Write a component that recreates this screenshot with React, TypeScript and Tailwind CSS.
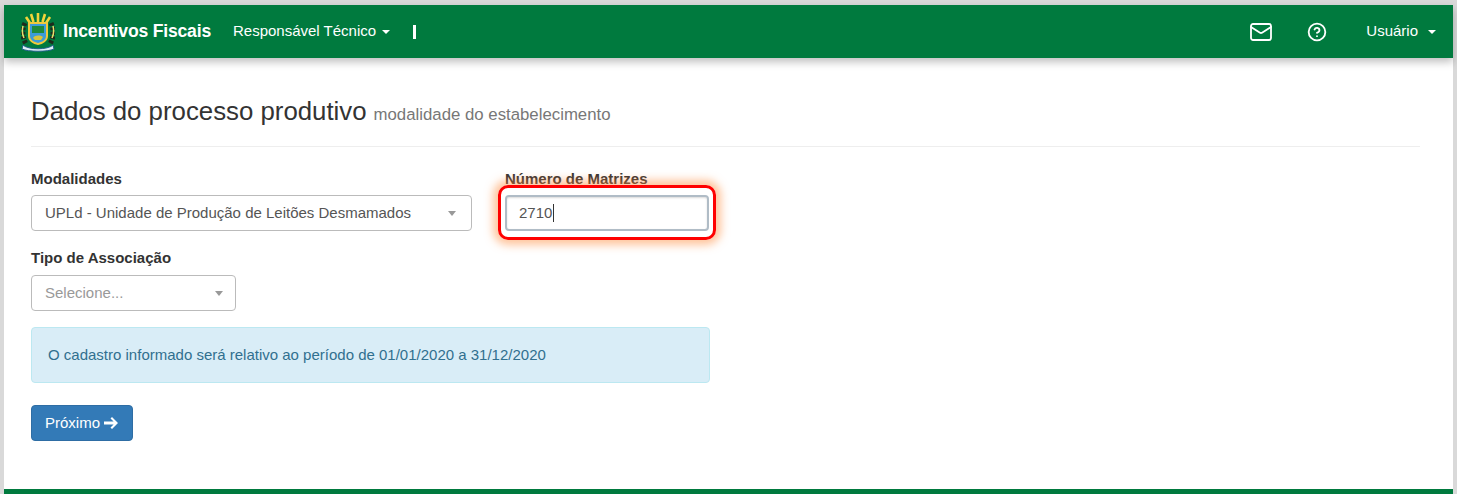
import { HelpCircle, Mail } from 'lucide-react';

const Caret = ({ gap }: { gap: string }) => (
  <span className={`${gap} inline-block h-0 w-0 border-x-[4px] border-t-[4px] border-x-transparent border-t-current align-middle`} />
);

const SelectCaret = () => (
  <span className="h-0 w-0 border-x-[4px] border-t-[5px] border-x-transparent border-t-[#999]" />
);

// brasao do estado, desenhado a mao
const Crest = () => (
  <svg width="34" height="40" viewBox="0 0 34 40">
    <g stroke="#f2d43a" strokeWidth="2.6">
      <path d="M17 10V1M12.5 10 10 2M21.5 10l2.500-8M9 11 5 5M25 11l4-6" />
    </g>
    <path d="M4 11c-3 6-3 14 1 21" fill="none" stroke="#1d2b1c" strokeWidth="5" strokeDasharray="3 1.5" />
    <path d="M30 11c3 6 3 14-1 21" fill="none" stroke="#1d2b1c" strokeWidth="5" strokeDasharray="3 1.5" />
    <path d="M2 14c-1 4-1 8 1 12M32 14c1 4 1 8-1 12" fill="none" stroke="#e8dc6a" strokeWidth="1.5" />
    <path d="M7 10h20v14c0 5-5 8-10 9-5-1-10-4-10-9z" fill="#f0c93c" />
    <path d="M9 12h16v12c0 4-4 6-8 7-4-1-8-3-8-7z" fill="#3d9bd8" />
    <path d="M11 14h12v7H11z" fill="#1f8a3c" />
    <path d="M12 26c2-3 7-3 10-1l-2 3h-6z" fill="#d8c43c" />
    <path d="M2 33c5 5 25 5 30 0l1 4c-6 3-26 3-32 0z" fill="#dfeef5" stroke="#1f5f8a" strokeWidth="1" />
  </svg>
);

export default function App() {
  return (
    <div className="h-[494px] w-[1457px] overflow-hidden bg-white font-['Liberation_Sans',sans-serif] text-[15px] text-[#333]">
      <div className="flex h-full flex-col border-t-[5px] border-l-[4px] border-r-[4px] border-[#d9d9d9]">
        <header className="flex h-[53px] w-full shrink-0 items-center bg-[#007a3e] pl-[17px] pr-[17px] text-white shadow-[0_4px_8px_rgba(0,0,0,0.25)]">
          <Crest />
          <span className="ml-[8px] text-[17.6px] font-bold tracking-[-0.2px]">Incentivos Fiscais</span>
          <span className="ml-[22px] flex items-center text-[15px]">
            Responsável Técnico
            <Caret gap="ml-[6px]" />
          </span>
          <span className="ml-[23px] h-[14px] w-[3px] bg-white" />
          <div className="ml-auto flex items-center">
            <Mail size={24} strokeWidth={1.8} />
            <HelpCircle size={20} strokeWidth={2.2} className="ml-[34px]" />
            <span className="ml-[39px] flex items-center text-[15px]">
              Usuário
              <Caret gap="ml-[10px]" />
            </span>
          </div>
        </header>

        <main className="min-h-0 flex-1 pl-[27px] pr-[33px]">
          <div className="mt-[38px] flex items-baseline border-b border-[#eeeeee] pb-[19px]">
            <h1 className="text-[25.8px] leading-[30px] text-[#333]">Dados do processo produtivo</h1>
            <small className="ml-[7px] text-[16.8px] text-[#777]">modalidade do estabelecimento</small>
          </div>

          <div className="mt-[22px] flex">
            <div className="w-[441px]">
              <label className="block text-[15px] font-bold leading-[20px]">Modalidades</label>
              <div className="mt-[6px] flex h-[36px] items-center justify-between rounded-[4px] border border-[#bbbbbb] pl-[13px] pr-[15px] text-[#555]">
                <span>UPLd - Unidade de Produção de Leitões Desmamados</span>
                <SelectCaret />
              </div>
            </div>
            <div className="relative ml-[33px] w-[204px]">
              <label className="block text-[15px] font-bold leading-[20px]">Número de Matrizes</label>
              <div className="mt-[6px] flex h-[36px] items-center rounded-[4px] border-2 border-[#b0bcc6] pl-[12px] text-[#555] shadow-[inset_0_1px_2px_rgba(0,0,0,0.15)]">
                2710
                <span className="ml-[1px] h-[18px] w-px bg-[#333]" />
              </div>
              {/* destaque vermelho da anotacao */}
              <div className="pointer-events-none absolute left-[-7px] top-[16px] h-[55px] w-[218px] rounded-[10px] border-[3px] border-[#ff0000] shadow-[0_0_8px_5px_rgba(255,140,60,0.5)]" />
            </div>
          </div>

          <div className="mt-[17px] w-[205px]">
            <label className="block text-[15px] font-bold leading-[20px]">Tipo de Associação</label>
            <div className="mt-[7px] flex h-[36px] items-center justify-between rounded-[4px] border border-[#bbbbbb] pl-[13px] pr-[12px] text-[#999]">
              <span>Selecione...</span>
              <SelectCaret />
            </div>
          </div>

          <div className="mt-[16px] flex h-[56px] w-[679px] items-center rounded-[4px] border border-[#bce8f1] bg-[#d9edf7] pl-[16px] text-[#31708f]">
            O cadastro informado será relativo ao período de 01/01/2020 a 31/12/2020
          </div>

          <button className="mt-[22px] flex h-[36px] w-[102px] items-center justify-center rounded-[4px] border border-[#2e6da4] bg-[#337ab7] text-white">
            Próximo
            <svg width="16" height="14" viewBox="0 0 16 14" className="ml-[3px]">
              <path d="M9 1 15 7 9 13 7.5 11.5 10.6 8.6H1V5.4H10.6L7.5 2.5Z" fill="#fff" />
            </svg>
          </button>
        </main>

        <footer className="h-[5px] w-full shrink-0 bg-[#007a3e]" />
      </div>
    </div>
  );
}
